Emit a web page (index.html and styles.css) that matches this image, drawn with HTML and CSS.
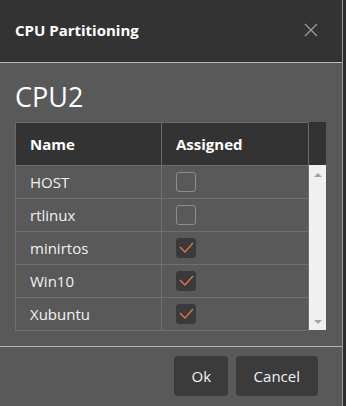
FILE: index.html
```html
<!DOCTYPE html>
<html lang="en">
<head>
    <meta charset="UTF-8">
    <title>CPU Partitioning</title>
    <link rel="stylesheet" href="styles.css">
</head>
<body>
    <div class="dialog">
        <div class="dialog-header">
            <h1>CPU Partitioning</h1>
            <button class="close-btn" aria-label="Close">
                <svg width="14" height="14" viewBox="0 0 14 14">
                    <path d="M1 1 L13 13 M13 1 L1 13" stroke="#9a9a9a" stroke-width="1.4" fill="none"/>
                </svg>
            </button>
        </div>

        <div class="dialog-body">
            <h2>CPU2</h2>
            <div class="grid">
                <table>
                    <thead>
                        <tr>
                            <th class="col-name">Name</th>
                            <th>Assigned</th>
                        </tr>
                    </thead>
                    <tbody>
                        <tr><td>HOST</td><td><span class="check"></span></td></tr>
                        <tr><td>rtlinux</td><td><span class="check"></span></td></tr>
                        <tr><td>minirtos</td><td><span class="check checked"><svg width="20" height="20" viewBox="0 0 20 20"><path d="M4 9 L9 14 L17 5"/></svg></span></td></tr>
                        <tr><td>Win10</td><td><span class="check checked"><svg width="20" height="20" viewBox="0 0 20 20"><path d="M4 9 L9 14 L17 5"/></svg></span></td></tr>
                        <tr><td>Xubuntu</td><td><span class="check checked"><svg width="20" height="20" viewBox="0 0 20 20"><path d="M4 9 L9 14 L17 5"/></svg></span></td></tr>
                    </tbody>
                </table>
                <div class="scroll">
                    <div class="scroll-head"></div>
                    <div class="scroll-track">
                        <span class="arrow up"></span>
                        <span class="arrow down"></span>
                    </div>
                </div>
            </div>
        </div>

        <div class="dialog-footer">
            <button class="btn">Ok</button>
            <button class="btn">Cancel</button>
        </div>
    </div>
</body>
</html>
```

FILE: styles.css
```css
:root {
    --header: #333333;
    --body: #595959;
    --line: #707070;
    --text: #f2f2f2;
    --accent: #e0713c;
}

* {
    margin: 0;
    padding: 0;
    box-sizing: border-box;
}

body {
    font-family: 'Open Sans', 'Noto Sans', sans-serif;
    background-color: #2c2c2c;
    color: var(--text);
    width: 346px;
    height: 406px;
    overflow: hidden;
}

.dialog {
    width: 343px;
    height: 406px;
    background-color: var(--body);
    border-right: 1px solid #9a9a9a;
    display: flex;
    flex-direction: column;
}

.dialog-header {
    height: 63px;
    background-color: var(--header);
    border-bottom: 1px solid #b8b8b8;
    display: flex;
    align-items: center;
    justify-content: space-between;
    padding: 0 24px 2px 15px;
}

.dialog-header h1 {
    font-size: 15px;
    font-weight: 700;
    color: #ffffff;
}

.close-btn {
    background: none;
    border: none;
    width: 14px;
    height: 14px;
    display: flex;
    cursor: pointer;
}

.dialog-body {
    padding: 16px 16px 0 15px;
    height: 284px;
    border-bottom: 1px solid #b0b0b0;
}

.dialog-body h2 {
    font-size: 27px;
    font-weight: 400;
    line-height: 36px;
    color: #ffffff;
    margin-bottom: 7px;
}

.grid {
    display: flex;
}

table {
    width: 294px;
    border-collapse: collapse;
    font-size: 15px;
}

th, td {
    text-align: left;
    padding: 0 0 0 14px;
    border: 1px solid var(--line);
}

th {
    height: 43px;
    background-color: var(--header);
    font-weight: 700;
    color: #ffffff;
    border-color: #6a6a6a;
}

td {
    height: 33px;
}

.col-name {
    width: 146px;
}

.check {
    display: block;
    width: 20px;
    height: 20px;
    border: 1px solid #8e8e8e;
    border-radius: 3px;
}

.check.checked {
    background-color: #3a3a3a;
    border-color: #3a3a3a;
}

.check svg {
    display: block;
    margin: -1px;
}

.check path {
    stroke: var(--accent);
    stroke-width: 1.5;
    fill: none;
}

.scroll {
    width: 17px;
    display: flex;
    flex-direction: column;
}

.scroll-head {
    height: 43px;
    background-color: var(--header);
}

.scroll-track {
    height: 165px;
    background-color: #f0f0f0;
    display: flex;
    flex-direction: column;
    justify-content: space-between;
    align-items: center;
    padding: 8px 0 6px;
}

.arrow {
    width: 0;
    height: 0;
    border-left: 4px solid transparent;
    border-right: 4px solid transparent;
}

.arrow.up {
    border-bottom: 4px solid #a3a3a3;
}

.arrow.down {
    border-top: 4px solid #a3a3a3;
}

.dialog-footer {
    flex: 1;
    display: flex;
    justify-content: flex-end;
    align-items: flex-start;
    gap: 8px;
    padding: 9px 24px 0 0;
}

.btn {
    height: 40px;
    padding: 0 18px;
    background-color: #3b3b3b;
    color: #f2f2f2;
    border: none;
    border-radius: 4px;
    font-family: inherit;
    font-size: 15px;
    cursor: pointer;
}

.btn:first-child {
    width: 54px;
}
```
